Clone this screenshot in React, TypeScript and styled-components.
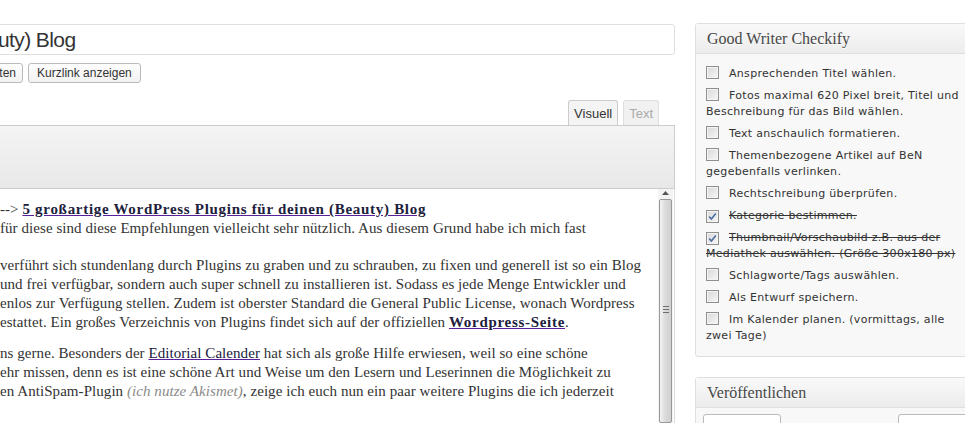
import React from 'react';
import styled, { createGlobalStyle } from 'styled-components';

const GlobalStyle = createGlobalStyle`
  html, body {
    margin: 0;
    padding: 0;
    background: #fff;
    overflow: hidden;
  }
  body {
    font-family: "Liberation Sans", Arial, sans-serif;
    color: #333;
  }
`;

const Page = styled.div`
  display: flex;
  gap: 20px;
  margin-left: -20px;
  width: 1010px;
  height: 423px;
`;

const MainColumn = styled.div`
  width: 695px;
  flex: none;
  padding-top: 24px;
  display: flex;
  flex-direction: column;
`;

const TitleBox = styled.div`
  height: 31px;
  box-sizing: border-box;
  border: 1px solid #dfdfdf;
  border-radius: 3px;
  background: #fff;
  display: flex;
  align-items: center;
  padding: 1px 0 0 17px;
  font-size: 21px;
  letter-spacing: -0.6px;
  color: #333;
  white-space: nowrap;
  overflow: hidden;
`;

const PermalinkRow = styled.div`
  display: flex;
  gap: 5px;
  margin-top: 8px;
  height: 20px;
`;

const SmallButton = styled.button<{ $offset?: number }>`
  height: 20px;
  padding: 0 ${(p) => (p.$offset ? 6 : 8)}px 0 8px;
  margin-left: ${(p) => p.$offset ?? 0}px;
  font: 12px "Liberation Sans", Arial, sans-serif;
  color: #333;
  border: 1px solid #bbb;
  border-radius: 3px;
  background: linear-gradient(#fefefe, #f2f2f2);
  white-space: nowrap;
`;

const TabRow = styled.div`
  display: flex;
  justify-content: flex-end;
  gap: 5px;
  margin-top: 17px;
  padding-right: 16px;
  height: 25px;
`;

const Tab = styled.div<{ $active?: boolean }>`
  height: 25px;
  box-sizing: border-box;
  padding: 5px 5px 0;
  font-size: 13px;
  border: 1px solid ${(p) => (p.$active ? '#ccc' : '#dfdfdf')};
  border-bottom: none;
  border-radius: 3px 3px 0 0;
  background: ${(p) => (p.$active ? '#f4f4f4' : '#f1f1f1')};
  color: ${(p) => (p.$active ? '#333' : '#aaa')};
  position: relative;
  z-index: 1;
  margin-bottom: -1px;
`;

const Toolbar = styled.div`
  height: 64px;
  box-sizing: border-box;
  border: 1px solid #ccc;
  border-left: none;
  background: linear-gradient(#f4f4f4, #e8e8e8);
`;

const EditorBody = styled.div`
  flex: 1;
  display: flex;
  border-right: 1px solid #dcdcdc;
  overflow: hidden;
  background: #fff;
`;

const Content = styled.div`
  flex: 1;
  padding: 11px 0 0 20px;
  font-family: "Liberation Serif", "Times New Roman", serif;
  font-size: 15px;
  letter-spacing: 0.06px;
  line-height: 19px;
  color: #333;
`;

const Para = styled.div<{ $after?: number }>`
  margin-bottom: ${(p) => p.$after ?? 12}px;
`;

const Line = styled.div`
  white-space: nowrap;
`;

const Link = styled.a<{ $bold?: boolean }>`
  color: #20203c;
  font-weight: ${(p) => (p.$bold ? 700 : 400)};
  letter-spacing: ${(p) => (p.$bold ? '0.7px' : 'inherit')};
  text-decoration: underline;
  text-decoration-color: #5b1f9a;
`;

const Aside = styled.span`
  color: #8a8a8a;
  font-style: italic;
`;

const Scrollbar = styled.div`
  width: 15px;
  flex: none;
  margin-right: 1px;
  background: #f3f3f3;
  display: flex;
  flex-direction: column;
  align-items: center;
`;

const ScrollArrow = styled.div`
  width: 15px;
  height: 16px;
  display: flex;
  align-items: center;
  justify-content: center;
`;

const Thumb = styled.div`
  width: 13px;
  height: 320px;
  margin-top: 1px;
  box-sizing: border-box;
  border: 1px solid #979797;
  border-radius: 2px;
  background: linear-gradient(90deg, #f4f4f4, #dcdcdc 45%, #cfcfcf);
  display: flex;
  flex-direction: column;
  align-items: center;
  padding-top: 106px;
  gap: 2px;
`;

const Grip = styled.div`
  width: 6px;
  height: 1px;
  background: #6d6d6d;
`;

const Sidebar = styled.div`
  width: 290px;
  flex: none;
  padding-top: 23px;
  display: flex;
  flex-direction: column;
  gap: 20px;
`;

const Postbox = styled.div`
  border: 1px solid #dfdfdf;
  border-radius: 3px;
  background: #f8f8f8;
`;

const PostboxHeader = styled.div`
  height: 29px;
  border-bottom: 1px solid #dfdfdf;
  background: linear-gradient(#f9f9f9, #ececec);
  padding: 0 11px;
  display: flex;
  align-items: center;
  font-family: "Liberation Serif", Georgia, serif;
  font-size: 16px;
  color: #464646;
  text-shadow: 0 1px 0 #fff;
`;

const Checklist = styled.div`
  padding: 12px 10px 12px 10px;
  display: flex;
  flex-direction: column;
  gap: 6px;
`;

const CheckItem = styled.div<{ $done?: boolean }>`
  font-family: "DejaVu Sans", Verdana, sans-serif;
  font-size: 11px;
  letter-spacing: 0.3px;
  line-height: 16px;
  color: #333;
  white-space: nowrap;
  text-decoration: ${(p) => (p.$done ? 'line-through' : 'none')};
`;

const Box = styled.span`
  display: inline-flex;
  align-items: center;
  justify-content: center;
  width: 13px;
  height: 13px;
  box-sizing: border-box;
  border: 1px solid #8f8f8f;
  background: linear-gradient(135deg, #d8d8d8, #f7f7f7);
  box-shadow: inset 0 0 0 1px #f4f4f4;
  vertical-align: -2px;
  margin-right: 10px;
`;

const PublishBody = styled.div`
  display: flex;
  justify-content: space-between;
  padding: 6px 13px 10px 7px;
`;

const WhiteButton = styled.div<{ $w: number }>`
  width: ${(p) => p.$w}px;
  height: 24px;
  box-sizing: border-box;
  border: 1px solid #bbb;
  border-radius: 3px;
  background: #fff;
`;

const Checkbox = ({ checked }: { checked?: boolean }) => (
  <Box>
    {checked && (
      <svg width="9" height="9" viewBox="0 0 9 9">
        <path d="M1.2 4.6 L3.4 7 L7.8 1.4" fill="none" stroke="#4d6fa3" strokeWidth="1.6" />
      </svg>
    )}
  </Box>
);

const items: { lines: string[]; done?: boolean }[] = [
  { lines: ['Ansprechenden Titel wählen.'] },
  { lines: ['Fotos maximal 620 Pixel breit, Titel und', 'Beschreibung für das Bild wählen.'] },
  { lines: ['Text anschaulich formatieren.'] },
  { lines: ['Themenbezogene Artikel auf BeN', 'gegebenfalls verlinken.'] },
  { lines: ['Rechtschreibung überprüfen.'] },
  { lines: ['Kategorie bestimmen.'], done: true },
  { lines: ['Thumbnail/Vorschaubild z.B. aus der', 'Mediathek auswählen. (Größe 300x180 px)'], done: true },
  { lines: ['Schlagworte/Tags auswählen.'] },
  { lines: ['Als Entwurf speichern.'] },
  { lines: ['Im Kalender planen. (vormittags, alle', 'zwei Tage)'] },
];

export default function App() {
  return (
    <>
      <GlobalStyle />
      <Page>
        <MainColumn>
          <TitleBox>uty) Blog</TitleBox>
          <PermalinkRow>
            <SmallButton $offset={-31}>Bearbeiten</SmallButton>
            <SmallButton>Kurzlink anzeigen</SmallButton>
          </PermalinkRow>
          <TabRow>
            <Tab $active>Visuell</Tab>
            <Tab>Text</Tab>
          </TabRow>
          <Toolbar />
          <EditorBody>
            <Content>
              <Para $after={18}>
                <Line>
                  --&gt; <Link $bold>5 großartige WordPress Plugins für deinen (Beauty) Blog</Link>
                </Line>
                <Line>für diese sind diese Empfehlungen vielleicht sehr nützlich. Aus diesem Grund habe ich mich fast</Line>
              </Para>
              <Para>
                <Line>verführt sich stundenlang durch Plugins zu graben und zu schrauben, zu fixen und generell ist so ein Blog</Line>
                <Line>und frei verfügbar, sondern auch super schnell zu installieren ist. Sodass es jede Menge Entwickler und</Line>
                <Line>enlos zur Verfügung stellen. Zudem ist oberster Standard die General Public License, wonach Wordpress</Line>
                <Line>
                  estattet. Ein großes Verzeichnis von Plugins findet sich auf der offiziellen{' '}
                  <Link $bold>Wordpress-Seite</Link>.
                </Line>
              </Para>
              <Para>
                <Line>
                  ns gerne. Besonders der <Link>Editorial Calender</Link> hat sich als große Hilfe erwiesen, weil so eine schöne
                </Line>
                <Line>ehr missen, denn es ist eine schöne Art und Weise um den Lesern und Leserinnen die Möglichkeit zu</Line>
                <Line>
                  en AntiSpam-Plugin <Aside>(ich nutze Akismet)</Aside>, zeige ich euch nun ein paar weitere Plugins die ich jederzeit
                </Line>
              </Para>
            </Content>
            <Scrollbar>
              <ScrollArrow>
                <svg width="7" height="4" viewBox="0 0 7 4">
                  <path d="M0 4 L3.5 0 L7 4 Z" fill="#555" />
                </svg>
              </ScrollArrow>
              <Thumb>
                <Grip />
                <Grip />
                <Grip />
              </Thumb>
            </Scrollbar>
          </EditorBody>
        </MainColumn>
        <Sidebar>
          <Postbox>
            <PostboxHeader>Good Writer Checkify</PostboxHeader>
            <Checklist>
              {items.map((item, i) => (
                <CheckItem key={i} $done={item.done}>
                  <Checkbox checked={item.done} />
                  {item.lines[0]}
                  {item.lines[1] && (
                    <>
                      <br />
                      {item.lines[1]}
                    </>
                  )}
                </CheckItem>
              ))}
            </Checklist>
          </Postbox>
          <Postbox>
            <PostboxHeader>Veröffentlichen</PostboxHeader>
            <PublishBody>
              <WhiteButton $w={78} />
              <WhiteButton $w={73} />
            </PublishBody>
          </Postbox>
        </Sidebar>
      </Page>
    </>
  );
}
